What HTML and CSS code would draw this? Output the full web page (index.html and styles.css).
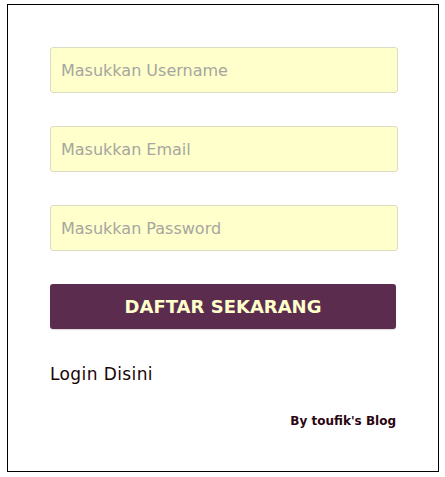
FILE: index.html
```html
<!DOCTYPE html>
<html>
<head>
<meta charset="utf-8">
<link rel="stylesheet" href="styles.css">
</head>
<body>
<div class="box">
  <form class="form">
    <input class="field" type="text" placeholder="Masukkan Username">
    <input class="field" type="email" placeholder="Masukkan Email">
    <input class="field" type="password" placeholder="Masukkan Password">
    <button class="submit" type="button">DAFTAR SEKARANG</button>
  </form>
  <div class="login">Login Disini</div>
  <div class="credit">By toufik's Blog</div>
</div>
</body>
</html>
```
FILE: styles.css
```css
html, body {
  margin: 0;
  padding: 0;
  background: #fff;
}
body {
  padding: 4px 0 0 7px;
  font-family: "DejaVu Sans", Verdana, sans-serif;
}
.box {
  box-sizing: border-box;
  width: 432px;
  height: 468px;
  border: 1px solid #000;
  padding: 42px 40px 0 42px;
}
.form {
  display: flex;
  flex-direction: column;
  gap: 33px;
  margin: 0;
}
.field {
  box-sizing: border-box;
  width: 348px;
  height: 46px;
  margin: 0;
  padding: 0 10px;
  border: 1px solid #dedbc4;
  border-radius: 3px;
  background: #ffffcc;
  font-family: "DejaVu Sans", Verdana, sans-serif;
  font-size: 16px;
  color: #555;
  outline: none;
}
.field::placeholder {
  color: #a6a6a0;
}
.submit {
  box-sizing: border-box;
  width: 346px;
  height: 45px;
  margin: 0;
  padding: 0;
  border: none;
  border-radius: 3px;
  background: #5c2c4f;
  color: #ffffcc;
  font-family: "DejaVu Sans", Verdana, sans-serif;
  font-weight: bold;
  font-size: 18px;
  box-shadow: 0 1px 1px rgba(0,0,0,0.15);
}
.login {
  margin-top: 35px;
  font-size: 17px;
  line-height: 20px;
  letter-spacing: 0.4px;
  color: #1a0505;
}
.credit {
  margin-top: 30px;
  width: 346px;
  text-align: right;
  font-size: 12px;
  line-height: 15px;
  font-weight: bold;
  color: #2a0512;
}
```
